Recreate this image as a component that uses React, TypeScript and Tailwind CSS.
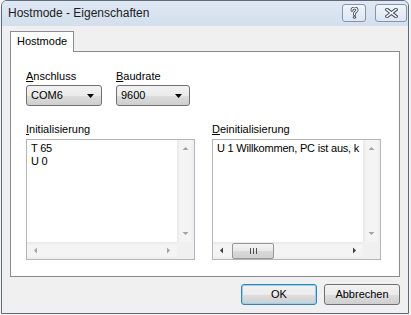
import React from "react";

const grad =
  "bg-[linear-gradient(to_bottom,#f2f2f2_0%,#ebebeb_50%,#dddddd_51%,#cfcfcf_100%)]";

function Arrow({ dir, color }: { dir: "up" | "down" | "left" | "right"; color: string }) {
  const pts: Record<string, string> = {
    up: "0.5,4 3.5,1 6.5,4",
    down: "0.5,1 3.5,4 6.5,1",
    left: "4,0.5 1,3.5 4,6.5",
    right: "1,0.5 4,3.5 1,6.5",
  };
  const horiz = dir === "left" || dir === "right";
  return (
    <svg width={horiz ? 5 : 7} height={horiz ? 7 : 5} viewBox={horiz ? "0 0 5 7" : "0 0 7 5"}>
      <polygon points={pts[dir]} fill={color} />
    </svg>
  );
}

function ComboArrow() {
  return (
    <svg width="7" height="4" viewBox="0 0 7 4">
      <polygon points="0,0 7,0 3.5,4" fill="#000" />
    </svg>
  );
}

function Combo({ value, width }: { value: string; width: string }) {
  return (
    <div
      className={`${width} h-[21px] border border-[#707070] rounded-[3px] ${grad} flex items-center pl-[4px] pr-[7px] justify-between`}
    >
      <span className="text-[11px] leading-[13px] text-black">{value}</span>
      <ComboArrow />
    </div>
  );
}

function ListBox({ lines, enabledH }: { lines: string[]; enabledH?: boolean }) {
  return (
    <div className="w-[169px] h-[121px] border border-[#b3b7bd] bg-white flex flex-col">
      <div className="flex flex-1 min-h-0">
        <div className="flex-1 min-w-0 overflow-hidden pl-[4px] pt-[2px]">
          {lines.map((l, i) => (
            <div key={i} className="text-[11px] leading-[13px] tracking-[-0.2px] text-black whitespace-nowrap">
              {l}
            </div>
          ))}
        </div>
        <div className="w-[17px] bg-[linear-gradient(to_right,#e9e9e9,#f4f4f4_20%,#f4f4f4_80%,#ececec)] flex flex-col justify-between">
          <div className="h-[17px] flex items-center justify-center">
            <Arrow dir="up" color="#a3a3a3" />
          </div>
          <div className="h-[17px] flex items-center justify-center">
            <Arrow dir="down" color="#a3a3a3" />
          </div>
        </div>
      </div>
      <div className="flex h-[17px]">
        <div className="flex-1 bg-[linear-gradient(to_bottom,#e9e9e9,#f4f4f4_20%,#f4f4f4_80%,#ececec)] flex items-center">
          <div className="w-[17px] h-[17px] flex items-center justify-center">
            <Arrow dir="left" color={enabledH ? "#404040" : "#a3a3a3"} />
          </div>
          <div className="flex-1 h-full flex items-center">
            {enabledH && (
              <div className="ml-[2px] w-[42px] h-[16px] border border-[#979797] rounded-[2px] bg-[linear-gradient(to_bottom,#f3f3f3_0%,#e8e8e8_50%,#d9d9d9_51%,#d0d0d0_100%)] flex items-center justify-center gap-[2px]">
                <div className="w-[1px] h-[6px] bg-[#505050]" />
                <div className="w-[1px] h-[6px] bg-[#505050]" />
                <div className="w-[1px] h-[6px] bg-[#505050]" />
              </div>
            )}
          </div>
          <div className="w-[17px] h-[17px] flex items-center justify-center">
            <Arrow dir="right" color={enabledH ? "#404040" : "#a3a3a3"} />
          </div>
        </div>
        <div className="w-[17px] bg-[#f0f0f0]" />
      </div>
    </div>
  );
}

function CaptionButton({ width, children }: { width: string; children: React.ReactNode }) {
  return (
    <div
      className={`${width} h-[18px] border border-[#8494aa] rounded-[3px] bg-[linear-gradient(to_bottom,#f1f5fb,#dde6f2)] flex items-center justify-center`}
    >
      {children}
    </div>
  );
}

export default function App() {
  return (
    <div
      className="w-[411px] h-[315px] bg-[#f3f3f3] overflow-hidden"
      style={{ fontFamily: '"Liberation Sans", Arial, sans-serif' }}
    >
      <div className="ml-[1px] w-[408px] h-[314px] border border-[#5e6a79] rounded-t-[6px] overflow-hidden flex flex-col bg-[#f0f0f0]">
        {/* title bar */}
        <div className="h-[25px] shrink-0 bg-[linear-gradient(to_bottom,#dfe8f4,#d3dfee)] flex items-start pt-[3px] pl-[6px] pr-[1px]">
          <div className="flex-1 text-[12px] leading-[15px] pt-[2px] text-[#1c1c1c]">
            Hostmode - Eigenschaften
          </div>
          <div className="flex gap-[9px]">
            <CaptionButton width="w-[24px]">
              <svg width="9" height="12" viewBox="0 0 9 12">
                <path
                  d="M2 3.2 C2 1.6 3.2 1 4.5 1 C6 1 7 1.8 7 3.1 C7 4.6 5 4.9 4.5 6.2 L4.5 7.4"
                  fill="none"
                  stroke="#4b5666"
                  strokeWidth="3"
                  strokeLinecap="round"
                />
                <path
                  d="M2 3.2 C2 1.6 3.2 1 4.5 1 C6 1 7 1.8 7 3.1 C7 4.6 5 4.9 4.5 6.2 L4.5 7.4"
                  fill="none"
                  stroke="#fff"
                  strokeWidth="1.2"
                  strokeLinecap="round"
                />
                <circle cx="4.5" cy="10.2" r="1.6" fill="#4b5666" />
                <circle cx="4.5" cy="10.2" r="0.6" fill="#fff" />
              </svg>
            </CaptionButton>
            <CaptionButton width="w-[32px]">
              <svg width="13" height="10" viewBox="0 0 13 10">
                <path d="M2 1.5 L11 8.5 M11 1.5 L2 8.5" stroke="#4b5666" strokeWidth="3.6" strokeLinecap="square" />
                <path d="M2 1.5 L11 8.5 M11 1.5 L2 8.5" stroke="#fff" strokeWidth="1.5" strokeLinecap="square" />
              </svg>
            </CaptionButton>
          </div>
        </div>

        {/* client */}
        <div className="flex-1 flex flex-col px-[8px] pt-[5px]">
          <div className="relative z-10 w-[64px] h-[21px] border border-b-0 border-[#898c95] bg-white pl-[6px] pt-[3px] text-[11px] leading-[13px] text-black">
            Hostmode
          </div>
          <div className="-mt-[1px] w-[390px] h-[226px] border border-[#898c95] bg-white pl-[15px] pt-[18px] flex flex-col">
            <div className="flex gap-[14px]">
              <div className="flex flex-col gap-[2px]">
                <div className="text-[11px] leading-[13px] text-black">
                  <span className="underline">A</span>nschluss
                </div>
                <Combo value="COM6" width="w-[76px]" />
              </div>
              <div className="flex flex-col gap-[2px]">
                <div className="text-[11px] leading-[13px] text-black">
                  <span className="underline">B</span>audrate
                </div>
                <Combo value="9600" width="w-[74px]" />
              </div>
            </div>
            <div className="flex gap-[17px] mt-[17px]">
              <div className="flex flex-col gap-[3px]">
                <div className="text-[11px] leading-[13px] text-black">
                  <span className="underline">I</span>nitialisierung
                </div>
                <ListBox lines={["T 65", "U 0"]} />
              </div>
              <div className="flex flex-col gap-[3px]">
                <div className="text-[11px] leading-[13px] text-black">
                  <span className="underline">D</span>einitialisierung
                </div>
                <ListBox lines={["U 1 Willkommen, PC ist aus, k"]} enabledH />
              </div>
            </div>
          </div>
          <div className="mt-[7px] w-[390px] flex justify-end gap-[7px]">
            <div
              className={`w-[76px] h-[21px] rounded-[3px] border border-[#3c7fb1] shadow-[inset_0_0_0_1px_#8fd3f5] ${grad} flex items-center justify-center text-[11px] text-black`}
            >
              OK
            </div>
            <div
              className={`w-[76px] h-[21px] rounded-[3px] border border-[#707070] ${grad} flex items-center justify-center text-[11px] text-black`}
            >
              Abbrechen
            </div>
          </div>
        </div>
      </div>
    </div>
  );
}
